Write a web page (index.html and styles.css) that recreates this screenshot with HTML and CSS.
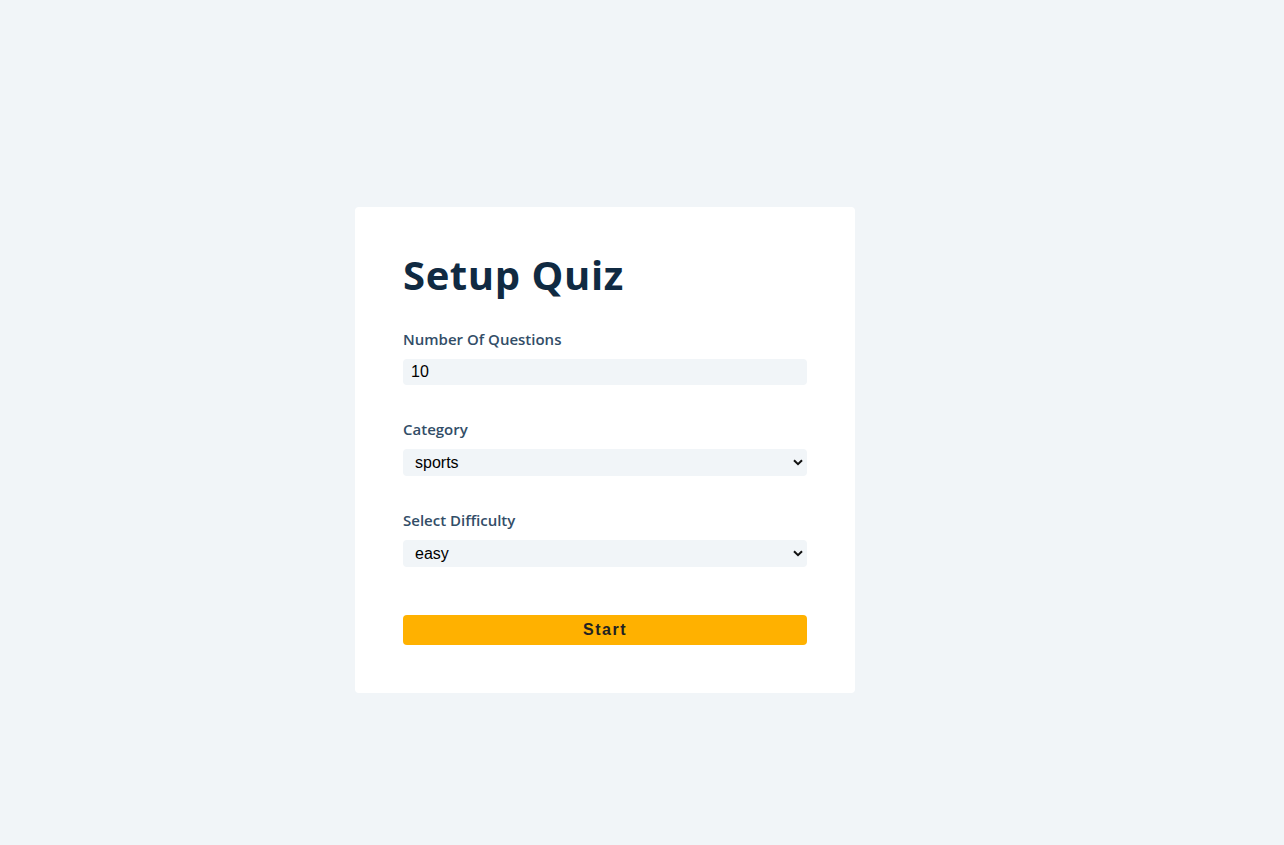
FILE: index.html
```html
<!DOCTYPE html>
<html lang="en">
<head>
  <meta charset="UTF-8" />
  <meta name="viewport" content="width=device-width, initial-scale=1.0"/>
  <title>Setup Quiz</title>
  <link rel="stylesheet" href="styles.css">
</head>
<body>

  <main>
    <section class="quiz quiz-small">
      <form class="setup-form">
        <h2>Setup Quiz</h2>

        <div class="form-control">
          <label for="amount">number of questions</label>
          <input type="number" name="amount" id="amount" class="form-input" value="10" min="1" max="50">
        </div>

        <div class="form-control">
          <label for="category">category</label>
          <div class="select-wrap">
            <select name="category" id="category" class="form-input">
              <option value="sports">sports</option>
              <option value="history">history</option>
              <option value="politics">politics</option>
            </select>
            <svg class="chevron" viewBox="0 0 10 7" width="10" height="7">
              <path d="M1 1.2 L5 5.2 L9 1.2" fill="none" stroke="#111" stroke-width="2"/>
            </svg>
          </div>
        </div>

        <div class="form-control">
          <label for="difficulty">select difficulty</label>
          <div class="select-wrap">
            <select name="difficulty" id="difficulty" class="form-input">
              <option value="easy">easy</option>
              <option value="medium">medium</option>
              <option value="hard">hard</option>
            </select>
            <svg class="chevron" viewBox="0 0 10 7" width="10" height="7">
              <path d="M1 1.2 L5 5.2 L9 1.2" fill="none" stroke="#111" stroke-width="2"/>
            </svg>
          </div>
        </div>

        <button type="submit" class="submit-btn">start</button>
      </form>
    </section>
  </main>

</body>
</html>
```

FILE: styles.css
```css
* {
  box-sizing: border-box;
}

body {
  margin: 0;
  background: #f1f5f8;
  font-family: "Open Sans", "Noto Sans", sans-serif;
  color: #102a42;
  font-size: 16px;
  line-height: 1.5;
}

main {
  min-height: 100vh;
  padding: 207px 0 0 355px;
}

.quiz {
  width: 500px;
  background: #fff;
  border-radius: 4px;
  padding: 48px;
}

.setup-form h2 {
  margin: 0 0 32px;
  font-size: 40px;
  line-height: 40px;
  font-weight: 700;
  letter-spacing: 0.6px;
  color: #102a42;
}

.form-control {
  margin-bottom: 32px;
}

.form-control label {
  display: block;
  text-transform: capitalize;
  font-weight: 600;
  font-size: 15px;
  line-height: 24px;
  color: #324d67;
  margin-bottom: 8px;
}

.form-input {
  display: block;
  width: 100%;
  border: none;
  outline: none;
  background: #f1f5f8;
  border-radius: 4px;
  font-family: "Liberation Sans", Arial, sans-serif;
  font-size: 16px;
  color: #000;
  height: 26px;
  padding: 2px 8px;
}

.select-wrap {
  position: relative;
}

select.form-input {
  appearance: none;
  -webkit-appearance: none;
  height: 27px;
  padding-left: 12px;
}

.chevron {
  position: absolute;
  right: 4px;
  top: 10px;
  pointer-events: none;
}

.submit-btn {
  display: block;
  width: 100%;
  height: 30px;
  margin-top: 48px;
  border: none;
  border-radius: 4px;
  background: #ffb100;
  color: #222;
  font-family: "Liberation Sans", Arial, sans-serif;
  font-size: 16px;
  font-weight: 700;
  letter-spacing: 1.5px;
  text-transform: capitalize;
  cursor: pointer;
}

.form-control:last-of-type {
  margin-bottom: 0;
}
```
